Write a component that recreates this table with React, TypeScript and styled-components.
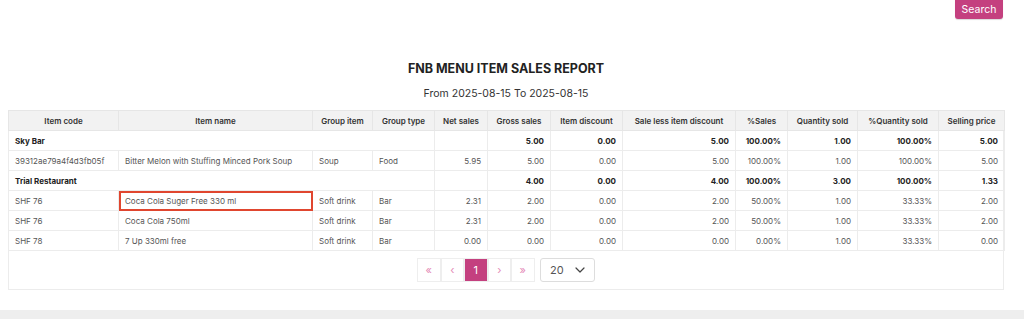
import styled, { createGlobalStyle } from 'styled-components';

const GlobalStyle = createGlobalStyle`
  body {
    margin: 0;
    background: #fff;
    font-family: Inter, 'Noto Sans', sans-serif;
  }
`;

const columns = [
  { label: 'Item code', width: 110 },
  { label: 'Item name', width: 194 },
  { label: 'Group item', width: 60 },
  { label: 'Group type', width: 62 },
  { label: 'Net sales', width: 53 },
  { label: 'Gross sales', width: 63 },
  { label: 'Item discount', width: 72 },
  { label: 'Sale less item discount', width: 113 },
  { label: '%Sales', width: 52 },
  { label: 'Quantity sold', width: 70 },
  { label: '%Quantity sold', width: 81 },
  { label: 'Selling price', width: 66 },
];

type Group = {
  name: string;
  totals: string[];
  items: { code: string; name: string; group: string; type: string; values: string[]; highlight?: boolean }[];
};

const groups: Group[] = [
  {
    name: 'Sky Bar',
    totals: ['5.00', '0.00', '5.00', '100.00%', '1.00', '100.00%', '5.00'],
    items: [
      {
        code: '39312ae79a4f4d3fb05f',
        name: 'Bitter Melon with Stuffing Minced Pork Soup',
        group: 'Soup',
        type: 'Food',
        values: ['5.95', '5.00', '0.00', '5.00', '100.00%', '1.00', '100.00%', '5.00'],
      },
    ],
  },
  {
    name: 'Trial Restaurant',
    totals: ['4.00', '0.00', '4.00', '100.00%', '3.00', '100.00%', '1.33'],
    items: [
      {
        code: 'SHF 76',
        name: 'Coca Cola Suger Free 330 ml',
        group: 'Soft drink',
        type: 'Bar',
        values: ['2.31', '2.00', '0.00', '2.00', '50.00%', '1.00', '33.33%', '2.00'],
        highlight: true,
      },
      {
        code: 'SHF 76',
        name: 'Coca Cola 750ml',
        group: 'Soft drink',
        type: 'Bar',
        values: ['2.31', '2.00', '0.00', '2.00', '50.00%', '1.00', '33.33%', '2.00'],
      },
      {
        code: 'SHF 78',
        name: '7 Up 330ml free',
        group: 'Soft drink',
        type: 'Bar',
        values: ['0.00', '0.00', '0.00', '0.00', '0.00%', '1.00', '33.33%', '0.00'],
      },
    ],
  },
];

const App = () => {
  return (
    <>
      <GlobalStyle />
      <Page>
        <TopBar>
          <SearchButton>Search</SearchButton>
        </TopBar>
        <Title>FNB MENU ITEM SALES REPORT</Title>
        <Subtitle>From 2025-08-15 To 2025-08-15</Subtitle>
        <ReportBox>
          <Table>
            <colgroup>
              {columns.map((c) => (
                <col key={c.label} style={{ width: c.width }} />
              ))}
            </colgroup>
            <thead>
              <tr>
                {columns.map((c) => (
                  <Th key={c.label}>{c.label}</Th>
                ))}
              </tr>
            </thead>
            <tbody>
              {groups.map((g) => (
                <GroupRows key={g.name} group={g} />
              ))}
            </tbody>
          </Table>
          <Pager>
            <PageButton>«</PageButton>
            <PageButton>‹</PageButton>
            <PageButton $active>1</PageButton>
            <PageButton>›</PageButton>
            <PageButton>»</PageButton>
            <SizeSelect>
              <span>20</span>
              <svg width="10" height="6" viewBox="0 0 10 6" fill="none">
                <path d="M1 1l4 4 4-4" stroke="#444" strokeWidth="1.2" strokeLinecap="round" strokeLinejoin="round" />
              </svg>
            </SizeSelect>
          </Pager>
        </ReportBox>
      </Page>
      <Footer />
    </>
  );
};

const GroupRows = ({ group }: { group: Group }) => (
  <>
    <tr>
      <Td colSpan={4} $bold>
        {group.name}
      </Td>
      <Td />
      {group.totals.map((v, i) => (
        <Td key={i} $bold $num>
          {v}
        </Td>
      ))}
    </tr>
    {group.items.map((item, idx) => (
      <tr key={idx}>
        <Td>{item.code}</Td>
        <Td $highlight={item.highlight}>{item.name}</Td>
        <Td>{item.group}</Td>
        <Td>{item.type}</Td>
        {item.values.map((v, i) => (
          <Td key={i} $num>
            {v}
          </Td>
        ))}
      </tr>
    ))}
  </>
);

export default App;

const Page = styled.div`
  padding: 0 20px 0 8px;
`;

const TopBar = styled.div`
  display: flex;
  justify-content: flex-end;
  height: 19px;
  overflow: visible;
`;

const SearchButton = styled.button`
  margin-top: -4px;
  margin-right: 1px;
  height: 23px;
  width: 48px;
  padding: 3px 0 0;
  border: none;
  border-radius: 3px;
  background: #c4407f;
  box-shadow: 0 1px 1px rgba(0, 0, 0, 0.15);
  color: #fff;
  font-family: Inter, sans-serif;
  font-size: 10.5px;
`;

const Title = styled.h2`
  margin: 42px 0 0;
  text-align: center;
  font-size: 12.5px;
  line-height: 16px;
  font-weight: 700;
  color: #222;
`;

const Subtitle = styled.div`
  margin-top: 10px;
  text-align: center;
  font-size: 10.5px;
  line-height: 14px;
  color: #333;
`;

const ReportBox = styled.div`
  margin-top: 9px;
  border: 1px solid #ececec;
  border-top: none;
`;

const Table = styled.table`
  width: 996px;
  margin-left: -1px;
  table-layout: fixed;
  border-collapse: collapse;
`;

const Th = styled.th`
  height: 19px;
  padding: 0 4px;
  background: #f2f2f2;
  border: 1px solid #e6e6e6;
  color: #333;
  font-size: 8px;
  font-weight: 600;
  text-align: center;
  white-space: nowrap;
  overflow: hidden;
`;

const Td = styled.td<{ $bold?: boolean; $num?: boolean; $highlight?: boolean }>`
  height: 19px;
  padding: 0 6px;
  border: 1px solid #ececec;
  color: ${(p) => (p.$bold ? '#222' : '#555')};
  font-size: 8px;
  font-weight: ${(p) => (p.$bold ? 700 : 400)};
  text-align: ${(p) => (p.$num ? 'right' : 'left')};
  white-space: nowrap;
  overflow: hidden;
  ${(p) => p.$highlight && 'outline: 2px solid #e0462f; outline-offset: -2px;'}
`;

const Pager = styled.div`
  display: flex;
  justify-content: center;
  align-items: center;
  padding: 7px 0 7px;
`;

const PageButton = styled.div<{ $active?: boolean }>`
  width: 23.5px;
  height: 24px;
  box-sizing: border-box;
  display: flex;
  align-items: center;
  justify-content: center;
  border: 1px solid #eee;
  background: ${(p) => (p.$active ? '#c4407f' : '#fff')};
  color: ${(p) => (p.$active ? '#fff' : '#e58bb7')};
  font-size: ${(p) => (p.$active ? '11px' : '11px')};
`;

const SizeSelect = styled.div`
  margin-left: 5.5px;
  width: 55px;
  height: 24px;
  box-sizing: border-box;
  display: flex;
  align-items: center;
  justify-content: space-between;
  padding: 0 9px 0 9px;
  border: 1px solid #ddd;
  border-radius: 3px;
  color: #555;
  font-size: 11px;
`;

const Footer = styled.div`
  margin-top: 20px;
  height: 40px;
  background: #eeeeee;
`;
